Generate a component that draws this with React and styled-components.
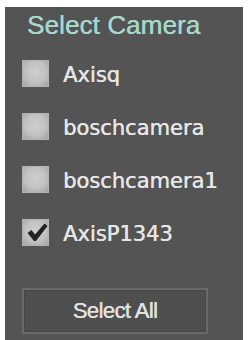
import React, { useState } from "react";
import styled, { createGlobalStyle } from "styled-components";

const GlobalStyle = createGlobalStyle`
  html, body {
    margin: 0;
    padding: 0;
    background: #ffffff;
  }
`;

const cameras = ["Axisq", "boschcamera", "boschcamera1", "AxisP1343"];

function Check({ checked }) {
  return (
    <Box>
      {checked && (
        <svg width="22" height="21" viewBox="0 0 22 20">
          <path
            d="M1.5 10.5 L5.5 7.5 L9 12 L18.5 1 L21.5 3.5 L10 18.5 L8 18.5 Z"
            fill="#222222"
          />
        </svg>
      )}
    </Box>
  );
}

export default function App() {
  const [selected, setSelected] = useState({ AxisP1343: true });

  const toggle = (name) => setSelected((s) => ({ ...s, [name]: !s[name] }));
  const selectAll = () =>
    setSelected(Object.fromEntries(cameras.map((c) => [c, true])));

  return (
    <>
      <GlobalStyle />
      <Page>
        <Panel>
          <Title>Select Camera</Title>
          <List>
            {cameras.map((c) => (
              <Row key={c} onClick={() => toggle(c)}>
                <Check checked={!!selected[c]} />
                <Label>{c}</Label>
              </Row>
            ))}
          </List>
          <Button onClick={selectAll}>Select All</Button>
        </Panel>
      </Page>
    </>
  );
}

const Page = styled.div`
  width: 249px;
  height: 340px;
  padding: 7px 6px 0 5px;
  box-sizing: border-box;
  display: flex;
`;

const Panel = styled.div`
  flex: 1;
  background: #545454;
  padding: 4px 0 0 17px;
  display: flex;
  flex-direction: column;
`;

const Title = styled.div`
  font-family: "Liberation Sans", Arial, sans-serif;
  font-size: 26px;
  letter-spacing: 0.1px;
  color: #a6d9cd;
  text-shadow: 0.3px 0 0 #a6d9cd;
  padding-left: 5px;
  line-height: 28px;
`;

const List = styled.div`
  display: flex;
  flex-direction: column;
  gap: 26px;
  margin-top: 21px;
`;

const Row = styled.div`
  display: flex;
  align-items: center;
  gap: 14px;
  height: 27px;
  cursor: pointer;
`;

const Box = styled.div`
  width: 27px;
  height: 27px;
  box-sizing: border-box;
  border: 1px solid #b4b4b4;
  background: radial-gradient(circle at 50% 45%, #cfcfcf 0%, #c2c2c2 55%, #a2a2a2 100%);
  display: flex;
  align-items: center;
  justify-content: center;
  padding-left: 3px;
`;

const Label = styled.span`
  font-family: "DejaVu Sans", Verdana, sans-serif;
  font-size: 21px;
  color: #e6e6e6;
  text-shadow: 0.4px 0 0 #e6e6e6;
  margin-top: 2px;
`;

const Button = styled.button`
  margin-top: 42px;
  width: 186px;
  height: 46px;
  background: #4f4f4f;
  border: 2px solid #6a6a6a;
  box-shadow: inset 0 0 0 1px #464646;
  font-family: "Liberation Sans", Arial, sans-serif;
  font-size: 22px;
  letter-spacing: -0.6px;
  color: #e2e2e2;
  text-shadow: 0.3px 0 0 #e2e2e2;
  cursor: pointer;
`;
